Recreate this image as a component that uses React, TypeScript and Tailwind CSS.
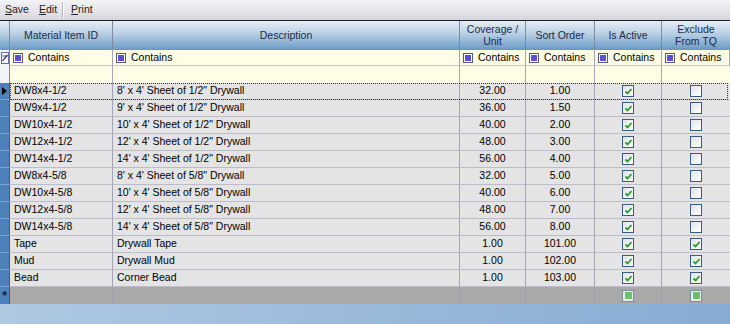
import React from "react";

const rows = [
  ["DW8x4-1/2", "8' x 4' Sheet of 1/2\" Drywall", "32.00", "1.00", true, false],
  ["DW9x4-1/2", "9' x 4' Sheet of 1/2\" Drywall", "36.00", "1.50", true, false],
  ["DW10x4-1/2", "10' x 4' Sheet of 1/2\" Drywall", "40.00", "2.00", true, false],
  ["DW12x4-1/2", "12' x 4' Sheet of 1/2\" Drywall", "48.00", "3.00", true, false],
  ["DW14x4-1/2", "14' x 4' Sheet of 1/2\" Drywall", "56.00", "4.00", true, false],
  ["DW8x4-5/8", "8' x 4' Sheet of 5/8\" Drywall", "32.00", "5.00", true, false],
  ["DW10x4-5/8", "10' x 4' Sheet of 5/8\" Drywall", "40.00", "6.00", true, false],
  ["DW12x4-5/8", "12' x 4' Sheet of 5/8\" Drywall", "48.00", "7.00", true, false],
  ["DW14x4-5/8", "14' x 4' Sheet of 5/8\" Drywall", "56.00", "8.00", true, false],
  ["Tape", "Drywall Tape", "1.00", "101.00", true, true],
  ["Mud", "Drywall Mud", "1.00", "102.00", true, true],
  ["Bead", "Corner Bead", "1.00", "103.00", true, true],
] as const;

const cols = "grid grid-cols-[10px_103px_347px_66px_69px_67px_68px]";

function Check({ checked }: { checked: boolean }) {
  return (
    <div className="w-[12px] h-[12px] border border-[#3d5a80] bg-gradient-to-br from-[#dfe3e8] to-white flex items-center justify-center">
      {checked && (
        <svg width="9" height="9" viewBox="0 0 9 9">
          <path d="M1.5 4.5 L3.5 6.5 L7.5 2" stroke="#22a022" strokeWidth="1.8" fill="none" />
        </svg>
      )}
    </div>
  );
}

function NewCheck() {
  return (
    <div className="w-[12px] h-[12px] border border-[#7d8a99] bg-[#e8eef0] flex items-center justify-center">
      <div className="w-[7px] h-[7px] bg-[#6cc06c]" />
    </div>
  );
}

function FilterCell({ last }: { last?: boolean }) {
  return (
    <div className={`flex items-center gap-[5px] pl-[3px] border-r border-[#a4a4b8] ${last ? "" : ""}`}>
      <div className="w-[10px] h-[10px] border border-[#5a5a78] bg-white flex items-center justify-center">
        <div className="w-[6px] h-[6px] bg-[#5a4fd8]" />
      </div>
      <span>Contains</span>
    </div>
  );
}

export default function App() {
  return (
    <div
      className="w-[730px] h-[324px] overflow-hidden text-[10.5px] text-black bg-gradient-to-r from-[#aec8e2] to-[#86abd3] flex flex-col"
      style={{ fontFamily: "Tahoma, 'Liberation Sans', Arial, sans-serif" }}
    >
      {/* toolbar */}
      <div className="h-[20px] bg-gradient-to-b from-[#f4f4f6] to-[#d6d6e0] flex items-center text-[#222] border-b border-[#1a1a1a] box-content">
        <span className="ml-[5px]"><u>S</u>ave</span>
        <span className="ml-[10px]"><u>E</u>dit</span>
        <div className="ml-[5px] w-px h-[16px] bg-[#b8b8c4] border-r border-white box-content" />
        <span className="ml-[7px]"><u>P</u>rint</span>
      </div>

      {/* header */}
      <div className={`${cols} h-[29px] bg-gradient-to-b from-[#e6eef6] via-[#b2cbe2] to-[#6d9cc5] text-[#1d2a48] text-center leading-[12px] border-b border-[#7a93ad]`}>
        <div className="border-r border-[#7d8aa0]" />
        <div className="flex items-center justify-center border-r border-[#7d8aa0]">Material Item ID</div>
        <div className="flex items-center justify-center border-r border-[#7d8aa0]">Description</div>
        <div className="flex items-center justify-center border-r border-[#7d8aa0]">Coverage /<br />Unit</div>
        <div className="flex items-center justify-center border-r border-[#7d8aa0]">Sort Order</div>
        <div className="flex items-center justify-center border-r border-[#7d8aa0]">Is Active</div>
        <div className="flex items-center justify-center">Exclude<br />From TQ</div>
      </div>

      {/* filter rows */}
      <div className={`${cols} h-[16px] bg-[#fffde6] border-b border-[#c9c9c0]`}>
        <div className="bg-[#f0f4f8] border-r border-[#6a8cb0] flex items-start justify-center pt-[2px]">
          <svg width="8" height="12" viewBox="0 0 8 12">
            <rect x="0.5" y="0.5" width="7" height="11" fill="white" stroke="#6070a0" />
            <path d="M1.5 9 L6.5 3" stroke="#3a3a8a" strokeWidth="1.2" />
            <path d="M1.5 4 H6.5" stroke="#3a3a8a" strokeWidth="1" />
          </svg>
        </div>
        <FilterCell />
        <FilterCell />
        <FilterCell />
        <FilterCell />
        <FilterCell />
        <FilterCell last />
      </div>
      <div className={`${cols} h-[17px] bg-[#fffde6]`}>
        <div className="bg-[#f0f4f8] border-r border-[#6a8cb0]" />
        <div className="border-r border-[#a4a4b8]" />
        <div className="border-r border-[#a4a4b8]" />
        <div className="border-r border-[#a4a4b8]" />
        <div className="border-r border-[#a4a4b8]" />
        <div className="border-r border-[#a4a4b8]" />
        <div />
      </div>

      {/* data rows */}
      {rows.map((r, i) => (
        <div key={i} className={`${cols} h-[17px] bg-[#e4e4e4] relative`}>
          <div className="bg-[#4e80bb] border-r border-[#2f5f98] border-b border-b-[#7aa4d2] flex items-center justify-center">
            {i === 0 && (
              <svg width="5" height="8" viewBox="0 0 5 8">
                <path d="M0 0 L5 4 L0 8 Z" fill="#000" />
              </svg>
            )}
          </div>
          <div className="flex items-center pl-[4px] border-r border-b border-[#a4a4b8] border-b-[#bcbccc]">{r[0]}</div>
          <div className="flex items-center pl-[4px] border-r border-b border-[#a4a4b8] border-b-[#bcbccc]">{r[1]}</div>
          <div className="flex items-center justify-center border-r border-b border-[#a4a4b8] border-b-[#bcbccc]">{r[2]}</div>
          <div className="flex items-center justify-center border-r border-b border-[#a4a4b8] border-b-[#bcbccc]">{r[3]}</div>
          <div className="flex items-center justify-center border-r border-b border-[#a4a4b8] border-b-[#bcbccc]"><Check checked={r[4]} /></div>
          <div className="flex items-center justify-center border-b border-[#bcbccc]"><Check checked={r[5]} /></div>
          {i === 0 && (
            <div className="absolute left-[10px] right-[2px] top-0 bottom-0 border border-dotted border-[#333]" />
          )}
        </div>
      ))}

      {/* new row */}
      <div className={`${cols} h-[17px] bg-[#a9a9a9]`}>
        <div className="bg-[#4e80bb] border-r border-[#2f5f98] flex items-center justify-center text-[#102040] text-[12px] font-bold leading-none">*</div>
        <div className="border-r border-[#a0a0ac]" />
        <div className="border-r border-[#a0a0ac]" />
        <div className="border-r border-[#a0a0ac]" />
        <div className="border-r border-[#a0a0ac]" />
        <div className="flex items-center justify-center border-r border-[#a0a0ac]"><NewCheck /></div>
        <div className="flex items-center justify-center"><NewCheck /></div>
      </div>
    </div>
  );
}
